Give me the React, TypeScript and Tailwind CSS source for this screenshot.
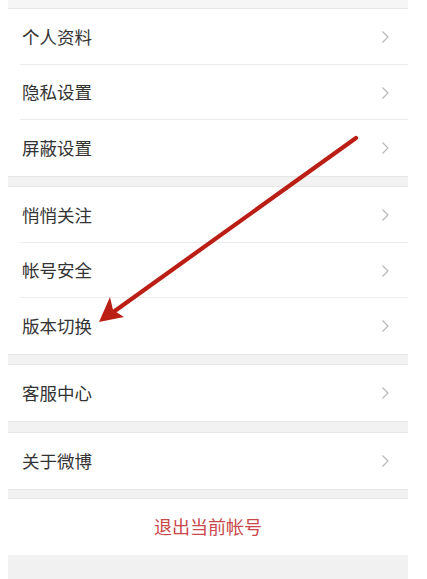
import React from "react";

const Chevron = () => (
  <svg width="9" height="14" viewBox="0 0 9 14" className="shrink-0">
    <path d="M1.5 1.5 L7 7 L1.5 12.5" fill="none" stroke="#b5b5b5" strokeWidth="1.1" />
  </svg>
);

const Row = ({ label, last }: { label: string; last?: boolean }) => (
  <div className="relative flex h-[55.7px] items-center justify-between bg-white pl-[14px] pr-[18px]">
    <span className="text-[17.5px] text-[#333333]">{label}</span>
    <Chevron />
    {!last && <div className="absolute bottom-0 left-[12px] right-0 h-px bg-[#ededed]" />}
  </div>
);

const Gap = ({ h = "h-[11px]" }: { h?: string }) => (
  <div className={`${h} border-y border-[#e6e6e6] bg-[#f2f2f2]`} />
);

export default function App() {
  return (
    <div
      className="relative h-[579px] w-[427px] overflow-hidden bg-white"
      style={{ fontFamily: '"Noto Sans CJK SC", "Noto Sans", sans-serif' }}
    >
      <div className="ml-[8px] flex w-[400px] flex-col bg-[#f4f4f4]">
        <div className="h-[9px] border-b border-[#e8e8e8] bg-[#f6f6f6]" />
        <Row label="个人资料" />
        <Row label="隐私设置" />
        <Row label="屏蔽设置" last />
        <Gap />
        <Row label="悄悄关注" />
        <Row label="帐号安全" />
        <Row label="版本切换" last />
        <Gap />
        <Row label="客服中心" last />
        <Gap h="h-[12px]" />
        <Row label="关于微博" last />
        <Gap h="h-[10px]" />
        <div className="flex h-[56px] items-center justify-center bg-white">
          <span className="text-[18px] text-[#c9474a]">退出当前帐号</span>
        </div>
        <div className="h-[30px] bg-[#f1f1f1]" />
      </div>
      <svg className="pointer-events-none absolute left-0 top-0" width="427" height="579" viewBox="0 0 427 579">
        <line x1="356" y1="138" x2="112" y2="313" stroke="#bb1e14" strokeWidth="4.2" strokeLinecap="round" />
        <path d="M99 322 L110 297 L113 310 L124 317 Z" fill="#bb1e14" />
      </svg>
    </div>
  );
}
